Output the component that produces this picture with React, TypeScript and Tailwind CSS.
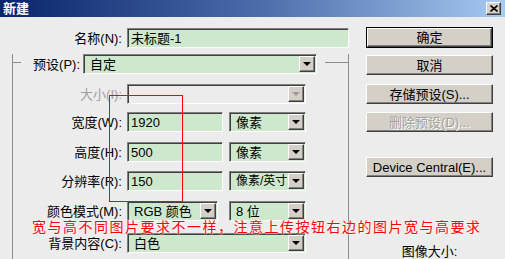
import React from 'react';

const font = "font-['Liberation_Sans','Noto_Sans_CJK_SC',sans-serif]";

// sunken field frame
const sunken =
  'border border-t-[#808080] border-l-[#808080] border-b-white border-r-white shadow-[inset_1px_1px_0_#404040]';
// raised button frame
const raised =
  'bg-[#d4d0c8] border border-t-white border-l-white border-b-[#404040] border-r-[#404040] shadow-[inset_-1px_-1px_0_#808080]';

const Arrow: React.FC<{ disabled?: boolean }> = ({ disabled }) => (
  <div className={`${raised} w-[16px] shrink-0 h-full flex items-center justify-center`}>
    <div
      className={`w-0 h-0 border-x-[4px] border-x-transparent border-t-[4px] ${
        disabled ? 'border-t-[#9a9a9a]' : 'border-t-black'
      }`}
    />
  </div>
);

interface FieldProps {
  width: string;
  text?: string;
  select?: boolean;
  disabled?: boolean;
  size?: string;
}

const Field: React.FC<FieldProps> = ({ width, text, select, disabled, size = 'text-[13px]' }) => (
  <div
    className={`${sunken} ${width} h-[20px] ${
      disabled ? 'bg-[#ececec]' : 'bg-[#cde8cd]'
    } flex items-stretch p-[1px]`}
  >
    <div
      className={`flex-1 min-w-0 overflow-hidden whitespace-nowrap flex items-center ${size} text-black leading-none ${
        select ? 'pl-[5px]' : 'pl-[2px]'
      }`}
    >
      {text}
    </div>
    {select && <Arrow disabled={disabled} />}
  </div>
);

const Label: React.FC<{ width: string; text: string; disabled?: boolean }> = ({ width, text, disabled }) => (
  <div
    className={`${width} text-right text-[13px] leading-none whitespace-nowrap ${
      disabled ? 'text-[#a0a0a0]' : 'text-black'
    }`}
  >
    {text}
  </div>
);

const Button: React.FC<{ text: string; def?: boolean; disabled?: boolean; mt: string; h?: string }> = ({
  text,
  def,
  disabled,
  mt,
  h = 'h-[20px]',
}) => (
  <div className={`${mt} ${h} w-[127px] ${def ? 'border border-black' : ''}`}>
    <div
      className={`${raised} h-full flex items-center justify-center text-[13px] leading-none ${
        disabled ? 'text-[#a0a0a0] [text-shadow:1px_1px_0_white]' : 'text-black'
      }`}
    >
      {text}
    </div>
  </div>
);

export default function App() {
  return (
    <div className={`${font} relative w-[505px] h-[259px] overflow-hidden bg-[#ececec]`}>
      {/* Title bar */}
      <div className="h-[17px] bg-linear-to-r from-[#0a246a] via-[#4a6aa8] to-[#a6caf0] flex items-center justify-between pl-[3px] pr-[4px]">
        <span className="text-white font-bold text-[13px] leading-none">新建</span>
        <div className={`${raised} w-[15px] h-[13px] flex items-center justify-center`}>
          <svg width="8" height="7" viewBox="0 0 8 7">
            <path d="M0.5 0.5 L7.5 6.5 M7.5 0.5 L0.5 6.5" stroke="black" strokeWidth="1.6" />
          </svg>
        </div>
      </div>

      <div className="flex">
        {/* Left column */}
        <div className="w-[366px]">
          <div className="mt-[11px] flex items-center">
            <Label width="w-[122px]" text="名称(N):" />
            <div className="ml-[5px]">
              <Field width="w-[222px]" text="未标题-1" />
            </div>
          </div>

          {/* Group box */}
          <div className="ml-[12px] w-[337px] mt-[14px] h-[300px] border-x border-[#8c8c8c]">
            <div className="-mt-[8px] h-[20px] flex items-start">
              <div className="w-[8px] mt-[8px] border-t border-[#8c8c8c]" />
              <div className="self-center">
                <Label width="w-[59px]" text="预设(P):" />
              </div>
              <div className="ml-[3px]">
                <Field width="w-[234px]" text="自定" select />
              </div>
              <div className="flex-1 ml-[8px] mt-[8px] border-t border-[#8c8c8c]" />
            </div>

            <div className="mt-[10px] flex items-center">
              <Label width="w-[109px]" text="大小(I):" disabled />
              <div className="ml-[5px]">
                <Field width="w-[179px]" select disabled />
              </div>
            </div>

            <div className="mt-[8px] flex items-center">
              <Label width="w-[109px]" text="宽度(W):" />
              <div className="ml-[5px] flex gap-[6px]">
                <Field width="w-[96px]" text="1920" />
                <Field width="w-[77px]" text="像素" select />
              </div>
            </div>

            <div className="mt-[10px] flex items-center">
              <Label width="w-[109px]" text="高度(H):" />
              <div className="ml-[5px] flex gap-[6px]">
                <Field width="w-[96px]" text="500" />
                <Field width="w-[77px]" text="像素" select />
              </div>
            </div>

            <div className="mt-[9px] flex items-center">
              <Label width="w-[109px]" text="分辨率(R):" />
              <div className="ml-[5px] flex gap-[6px]">
                <Field width="w-[96px]" text="150" />
                <Field width="w-[77px]" text="像素/英寸" select size="text-[12px]" />
              </div>
            </div>

            <div className="mt-[10px] flex items-center">
              <Label width="w-[109px]" text="颜色模式(M):" />
              <div className="ml-[5px] flex gap-[11px]">
                <Field width="w-[91px]" text="RGB 颜色" select />
                <Field width="w-[77px]" text="8 位" select />
              </div>
            </div>

            <div className="mt-[12px] flex items-center">
              <Label width="w-[109px]" text="背景内容(C):" />
              <div className="ml-[5px]">
                <Field width="w-[179px]" text="白色" select />
              </div>
            </div>
          </div>
        </div>

        {/* Right column */}
        <div className="w-[127px] flex flex-col">
          <Button text="确定" def mt="mt-[10px]" h="h-[21px]" />
          <Button text="取消" mt="mt-[7px]" />
          <Button text="存储预设(S)..." mt="mt-[9px]" />
          <Button text="删除预设(D)..." disabled mt="mt-[8px]" />
          <Button text="Device Central(E)..." mt="mt-[25px]" />
          <div className="mt-[68px] text-center text-[13px] leading-none text-black">图像大小:</div>
        </div>
      </div>

      {/* Annotation overlay */}
      <div className="absolute left-[109px] top-[95px] w-[74px] h-[107px] border border-[#ff0000]" />
      <div className="absolute left-[32px] top-[220px] text-[14px] leading-[14px] tracking-[1.5px] text-[#ff0000] whitespace-nowrap [text-shadow:0_0_2px_white,0_0_2px_white]">
        宽与高不同图片要求不一样，注意上传按钮右边的图片宽与高要求
      </div>
    </div>
  );
}
